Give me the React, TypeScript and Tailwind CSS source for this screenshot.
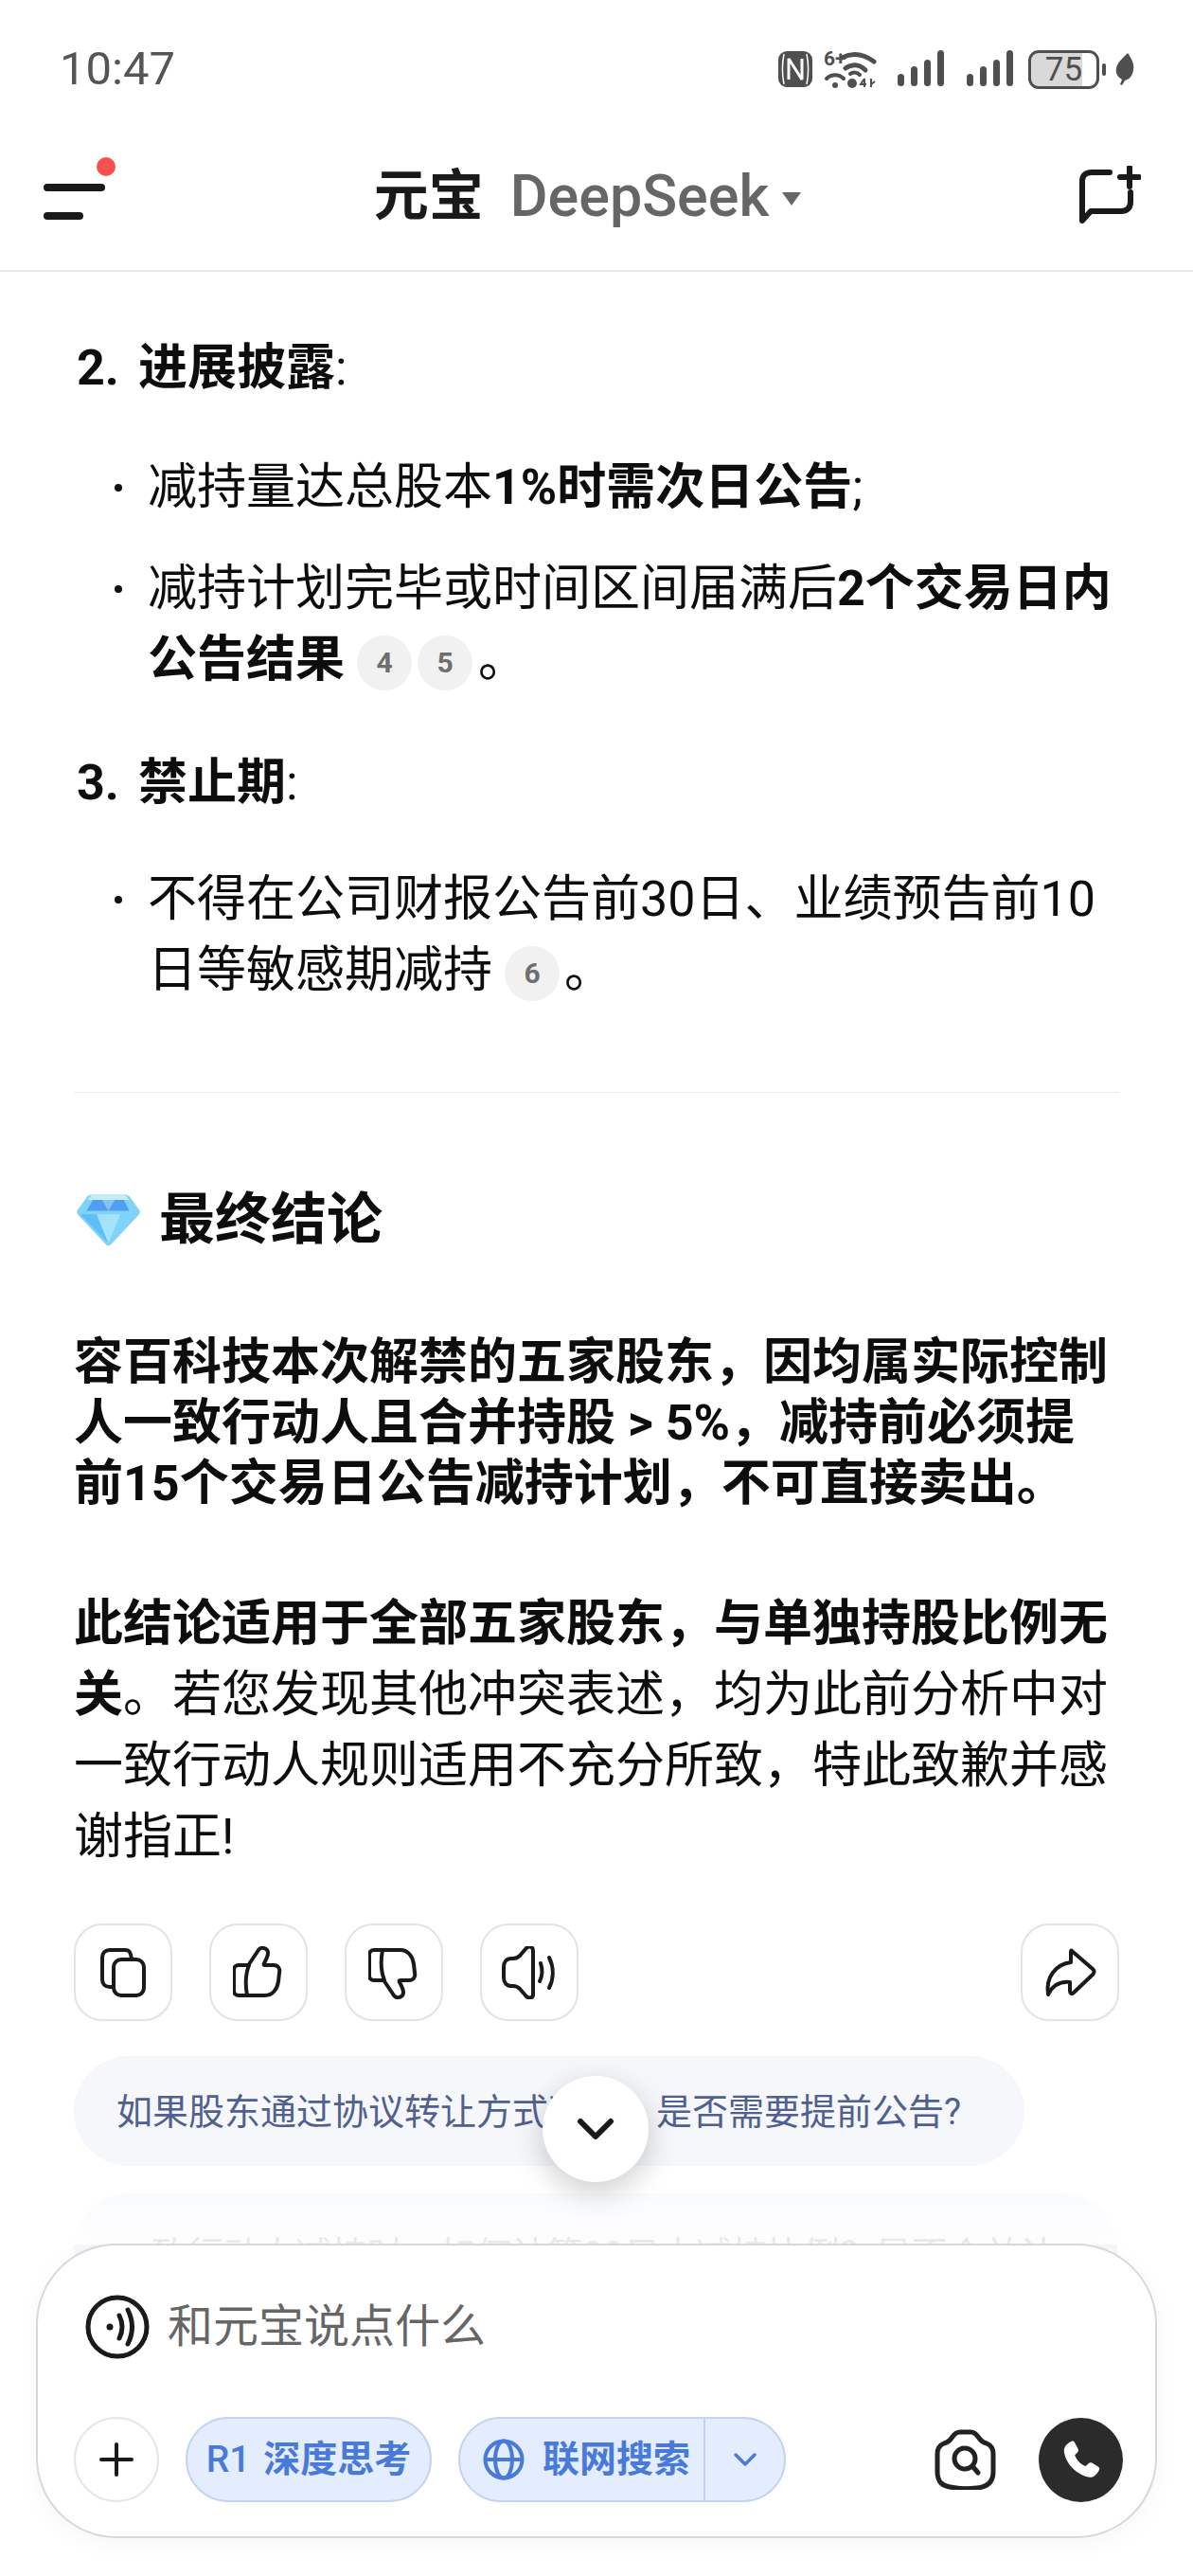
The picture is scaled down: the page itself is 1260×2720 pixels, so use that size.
import React from 'react';

const FONT = 'font-["Roboto","Noto_Sans_CJK_SC",sans-serif]';

const Cite = ({ n }: { n: number }) => (
  <span className="mx-[3px] inline-flex h-[58px] w-[58px] items-center justify-center rounded-full bg-[#f1f1f1] align-middle text-[30px] font-bold leading-none text-[#6e6e6e]">
    {n}
  </span>
);

const Bullet = ({ children, className = '' }: { children: React.ReactNode; className?: string }) => (
  <div className={`flex pl-[43px] ${className}`}>
    <span className="flex h-[75px] w-[35px] shrink-0 items-center">
      <span className="h-[8px] w-[8px] rounded-full bg-[#111]" />
    </span>
    <p className="w-[1030px] text-[52px] leading-[75px]">{children}</p>
  </div>
);

const ActionBtn = ({ children }: { children: React.ReactNode }) => (
  <button className="flex h-[103px] w-[104px] items-center justify-center rounded-[30px] border-2 border-[#e3e3e3] bg-white">
    {children}
  </button>
);

const Signal = ({ className }: { className: string }) => (
  <svg className={className} width="50" height="40" viewBox="0 0 50 40" fill="currentColor">
    <rect x="0" y="25" width="7" height="13" rx="3.5" />
    <rect x="14" y="17" width="7" height="21" rx="3.5" />
    <rect x="28" y="10" width="7" height="28" rx="3.5" />
    <rect x="42" y="0" width="7" height="38" rx="3.5" />
  </svg>
);

const StatusIcons = () => (
  <div className="flex items-center text-[#4f4f4f]">
    <svg width="36" height="38" viewBox="0 0 36 38" fill="currentColor">
      <rect width="36" height="38" rx="9" />
      <path d="M6 3c-2 10-2 22 0 32" stroke="#fff" strokeWidth="1.5" fill="none" />
      <path d="M30 3c2 10 2 22 0 32" stroke="#fff" strokeWidth="1.5" fill="none" />
      <path d="M11 30V8l14 22V8" stroke="#fff" strokeWidth="3" fill="none" strokeLinejoin="bevel" />
    </svg>
    <svg className="ml-[12px] overflow-visible" width="56" height="42" viewBox="0 0 56 42" fill="none" stroke="currentColor" strokeWidth="5" strokeLinecap="round">
      <text x="0" y="17" fontSize="21" fontWeight="700" fill="currentColor" stroke="none" fontFamily="Roboto">6+</text>
      <path d="M19 9c12-6 23-4 34 4M23 20c8-5 15-4 21 2" />
      <path d="M3 31c5-5 13-5 18 0" strokeWidth="4" />
      <path d="M28 26c3-2 7-2 10 1" strokeWidth="4" />
      <circle cx="12" cy="38" r="3" fill="currentColor" stroke="none" />
      <circle cx="30" cy="36" r="5" fill="currentColor" stroke="none" />
      <path d="M43 31l-4 6h6M43 31v9M50 31v9M50 37l4-3" strokeWidth="2" strokeLinecap="butt" />
    </svg>
    <Signal className="ml-[22px]" />
    <Signal className="ml-[23px]" />
    <div className="relative ml-[15px] flex h-[41px] w-[75px] items-center justify-center overflow-hidden rounded-[11px] border-[3px] border-[#4f4f4f] bg-[linear-gradient(90deg,#d9d9d9_78%,#fff_78%)]">
      <span className="text-[35px] leading-none">75</span>
    </div>
    <span className="ml-[3px] h-[13px] w-[4px] rounded-full bg-[#4f4f4f]" />
    <svg className="ml-[10px]" width="20" height="34" viewBox="0 0 20 34" fill="currentColor">
      <path d="M13 0c5 7 7 12 6 18-1 7-5 10-9 11l-3 5-2-1 2-5C2 25 0 21 1 16 2 10 8 5 13 0z" />
    </svg>
  </div>
);

const THUMB = 'M17 19 27 4c3-4 10-2 10 3 0 4-2 7-4 11-1 2 0 2 2 2h8c5 0 7 4 6 8l-1 9c-1 8-6 15-14 15H6c-3 0-5-2-5-5V25c0-3 2-5 5-5h11M17 20c-4 10-4 21-2 32';

export default function App() {
  return (
    <div className={`relative h-[2720px] w-[1260px] overflow-hidden bg-white text-[#0d0d0d] ${FONT}`}>
      <header className="h-[287px] border-b-2 border-[#e8e8e8]">
        <div className="flex h-[130px] items-center justify-between pl-[63px] pr-[62px] pt-[16px]">
          <span className="text-[49px] text-[#555]">10:47</span>
          <StatusIcons />
        </div>
        <div className="relative flex h-[155px] items-center justify-between pl-[46px] pr-[55px]">
          <div className="relative h-[60px] w-[66px]">
            <svg width="70" height="62" viewBox="0 0 70 62">
              <rect x="0" y="16" width="65" height="8" rx="4" fill="#1a1a1a" />
              <rect x="0" y="46" width="42" height="8" rx="4" fill="#1a1a1a" />
            </svg>
            <span className="absolute right-[-10px] top-[-12px] h-[20px] w-[20px] rounded-full bg-[#fb5050]" />
          </div>
          <div className="mr-[10px] flex items-center">
            <span className="text-[58px] font-bold text-[#1a1a1a]">元宝</span>
            <span className="ml-[28px] text-[61px] font-medium text-[#666]">DeepSeek</span>
            <span className="ml-[14px] mt-[4px] h-0 w-0 border-x-[10px] border-t-[14px] border-x-transparent border-t-[#666]" />
          </div>
          <svg width="66" height="66" viewBox="0 0 66 66" fill="none" stroke="#1a1a1a" strokeWidth="6" strokeLinecap="round" strokeLinejoin="round">
            <path d="M33 7H14C8 7 4 10 4 16v42l9-10h32c6 0 10-3 10-10V28" />
            <path d="M54 2v20M44 12h20" />
          </svg>
        </div>
      </header>

      <main className="px-[78px] pt-[64px]">
        <p className="pl-[3px] text-[52px] leading-[75px]">
          <span className="font-bold">
            2.<span className="ml-[20px]">进展披露</span>
          </span>
          :
        </p>
        <Bullet className="mt-[51px]">
          减持量达总股本<b>1%时需次日公告</b>;
        </Bullet>
        <Bullet className="mt-[32px]">
          减持计划完毕或时间区间届满后<b>2个交易日内公告结果</b>
          <span className="ml-[10px]" />
          <Cite n={4} />
          <Cite n={5} />
          <span className="ml-[3px]">。</span>
        </Bullet>
        <p className="mt-[55px] pl-[3px] text-[52px] leading-[75px]">
          <span className="font-bold">
            3.<span className="ml-[20px]">禁止期</span>
          </span>
          :
        </p>
        <Bullet className="mt-[48px]">
          不得在公司财报公告前30日、业绩预告前10日等敏感期减持
          <span className="ml-[10px]" />
          <Cite n={6} />
          <span className="ml-[2px]">。</span>
        </Bullet>

        <hr className="mt-[91px] border-[#ececec]" />

        <h2 className="mt-[94px] flex h-[80px] items-center text-[59px] font-bold">
          <svg className="ml-[3px] mr-[20px]" width="67" height="60" viewBox="0 0 70 60">
            <path d="M17 2h36c2 0 3 1 5 2l11 15c1 2 1 3 0 5L37 58c-1 1-3 1-4 0L1 24c-1-2-1-3 0-5L12 4c1-1 3-2 5-2z" fill="#7fd3f9" />
            <path d="M17 2h36l5 6H12z" fill="#c4ecfc" />
            <path d="M18 8h34l6 12H11z" fill="#4f9ff2" />
            <path d="M28 8h14l-7 12z" fill="#86c4f8" />
            <path d="M22 24h26L35 56z" fill="#a4e4fb" />
            <path d="M4 24h18l13 32z" fill="#5fbef5" />
          </svg>
          最终结论
        </h2>

        <p className="mt-[79px] text-[52px] font-bold leading-[64px]">
          容百科技本次解禁的五家股东，因均属实际控制人一致行动人且合并持股 &gt; 5%，减持前必须提前15个交易日公告减持计划，不可直接卖出。
        </p>
        <p className="mt-[78px] text-[52px] leading-[75px]">
          <b>此结论适用于全部五家股东，与单独持股比例无关</b>。若您发现其他冲突表述，均为此前分析中对一致行动人规则适用不充分所致，特此致歉并感谢指正!
        </p>

        <div className="mt-[54px] flex items-center justify-between">
          <div className="flex gap-[39px]">
            <ActionBtn>
              <svg width="48" height="52" viewBox="0 0 48 52" fill="none" stroke="#1a1a1a" strokeWidth="4" strokeLinejoin="round">
                <path d="M13 41H10c-5 0-8-3-8-8V10c0-5 3-8 8-8h16c5 0 6 3 7 9" />
                <rect x="14" y="12" width="32" height="38" rx="8" />
              </svg>
            </ActionBtn>
            <ActionBtn>
              <svg width="54" height="56" viewBox="0 0 54 56" fill="none" stroke="#1a1a1a" strokeWidth="4" strokeLinejoin="round" strokeLinecap="round">
                <path d={THUMB} />
              </svg>
            </ActionBtn>
            <ActionBtn>
              <svg width="54" height="56" viewBox="0 0 54 56" fill="none" stroke="#1a1a1a" strokeWidth="4" strokeLinejoin="round" strokeLinecap="round">
                <g transform="matrix(1 0 0 -1 0 56)">
                  <path d={THUMB} />
                </g>
              </svg>
            </ActionBtn>
            <ActionBtn>
              <svg width="58" height="56" viewBox="0 0 58 56" fill="none" stroke="#1a1a1a" strokeWidth="4" strokeLinejoin="round" strokeLinecap="round">
                <path d="M33 5v46c0 4-5 5-8 1l-6-7c-2-2-4-3-7-3h-2c-5 0-8-4-8-9V22c0-5 3-9 8-9h2c3 0 5-1 7-3l6-7c3-4 8-3 8 2z" />
                <path d="M41 18c2 6 2 13-1 19M50 12c5 10 5 22 0 32" />
              </svg>
            </ActionBtn>
          </div>
          <ActionBtn>
            <svg width="56" height="54" viewBox="0 0 56 54" fill="none" stroke="#1a1a1a" strokeWidth="4" strokeLinejoin="round" strokeLinecap="round">
              <path d="M30 4 52 23c2 2 2 4 0 6L32 48c-2 2-4 1-4-2v-9c-10-1-18 3-23 13C2 32 13 18 29 16V6c0-2 0-3 1-2z" />
            </svg>
          </ActionBtn>
        </div>

        <div className="mt-[37px] flex h-[116px] w-[1004px] items-center rounded-[58px] bg-[#f5f7fb] pl-[45px] pt-[2px] text-[38px] text-[#50608f]">
          如果股东通过协议转让方式减持，是否需要提前公告?
        </div>
        <div className="mt-[29px] flex h-[130px] w-[1102px] items-center rounded-[58px] bg-[#f5f7fb] pl-[82px] text-[38px] text-[#50608f]">
          致行动人减持时，如何计算90日内减持比例？是否合并计
        </div>
      </main>

      <div className="absolute inset-x-0 top-[2298px] h-[72px] bg-gradient-to-b from-white/40 to-white/90" />

      <button className="absolute left-[573px] top-[2192px] flex h-[112px] w-[112px] items-center justify-center rounded-full bg-white shadow-[0_10px_32px_rgba(0,0,0,0.2)]">
        <svg width="40" height="26" viewBox="0 0 40 26" fill="none" stroke="#1a1a1a" strokeWidth="6" strokeLinecap="round" strokeLinejoin="round">
          <path d="M4 5l16 16L36 5" />
        </svg>
      </button>

      <div className="absolute left-[38px] top-[2369px] h-[311px] w-[1184px] rounded-[85px] border-2 border-[#d8d8d8] bg-white pl-[38px] pr-[34px] pt-[52px] shadow-[0_6px_24px_rgba(0,0,0,0.04)]">
        <div className="flex h-[68px] items-center gap-[19px] pl-[12px]">
          <svg width="68" height="68" viewBox="0 0 68 68" fill="none" stroke="#1a1a1a" strokeLinecap="round">
            <circle cx="34" cy="34" r="31" strokeWidth="5" />
            <circle cx="26" cy="34" r="3.500" fill="#1a1a1a" stroke="none" />
            <path d="M36 22c4 8 4 16 0 24" strokeWidth="5" />
            <path d="M45 16c6 12 6 24 0 36" strokeWidth="5" />
          </svg>
          <span className="text-[48px] text-[#666]">和元宝说点什么</span>
        </div>
        <div className="mt-[61px] flex items-center">
          <div className="flex h-[90px] w-[90px] items-center justify-center rounded-full border-2 border-[#e6e6e6]">
            <svg width="36" height="36" viewBox="0 0 36 36" stroke="#1a1a1a" strokeWidth="4" strokeLinecap="round">
              <path d="M18 2v32M2 18h32" />
            </svg>
          </div>
          <div className="ml-[28px] flex h-[90px] w-[260px] items-center justify-center rounded-[45px] border-2 border-[#c3d4f0] bg-[#e4edfe] text-[39px] font-bold text-[#4a7ad9]">
            <span className="mr-[14px] font-medium">R1</span>深度思考
          </div>
          <div className="ml-[28px] flex h-[90px] w-[346px] items-center rounded-[45px] border-2 border-[#c3d4f0] bg-[#e4edfe] text-[39px] font-bold text-[#4a7ad9]">
            <svg className="ml-[24px] mr-[19px]" width="44" height="44" viewBox="0 0 44 44" fill="none" stroke="#4a7ad9" strokeWidth="4">
              <circle cx="22" cy="22" r="19.500" />
              <ellipse cx="22" cy="22" rx="9" ry="19.500" />
              <path d="M3 22h38" />
            </svg>
            <span className="flex-1">联网搜索</span>
            <span className="flex h-full w-[85px] items-center justify-center border-l-2 border-[#c3d4f0]">
              <svg width="26" height="16" viewBox="0 0 26 16" fill="none" stroke="#4a7ad9" strokeWidth="3.500" strokeLinecap="round" strokeLinejoin="round">
                <path d="M3 3l10 10L23 3" />
              </svg>
            </span>
          </div>
          <svg className="ml-auto" width="65" height="64" viewBox="0 0 65 64" fill="none" stroke="#222" strokeWidth="5" strokeLinejoin="round" strokeLinecap="round">
            <path d="M3 26c0-6 2-9 7-11 5-1 7-4 9-7 2-3 4-5 8-5h11c4 0 6 2 8 5 2 3 4 6 9 7 5 2 7 5 7 11v19c0 11-6 16-17 17-9 1-15 1-22 0C8 61 3 56 3 45z" />
            <circle cx="32" cy="31" r="11" />
            <path d="M40 39l6 7" />
          </svg>
          <div className="ml-[45px] flex h-[89px] w-[89px] items-center justify-center rounded-full bg-[#2b2b2b]">
            <svg width="48" height="48" viewBox="0 0 24 24" fill="#fff">
              <path d="M6.600 2.500c.7-.4 1.500-.2 1.900.5l1.800 3.400c.3.6.2 1.300-.3 1.800L8.600 9.600c.7 2.400 3.300 5.200 5.700 5.900l1.500-1.400c.5-.5 1.200-.6 1.800-.3l3.300 1.900c.7.4.9 1.200.5 1.900-1 2-2.600 3.900-5 3.800C9.600 20.100 3.700 14.300 2.900 7.600 2.700 5.300 4.600 3.500 6.600 2.500z" />
            </svg>
          </div>
        </div>
      </div>
    </div>
  );
}
